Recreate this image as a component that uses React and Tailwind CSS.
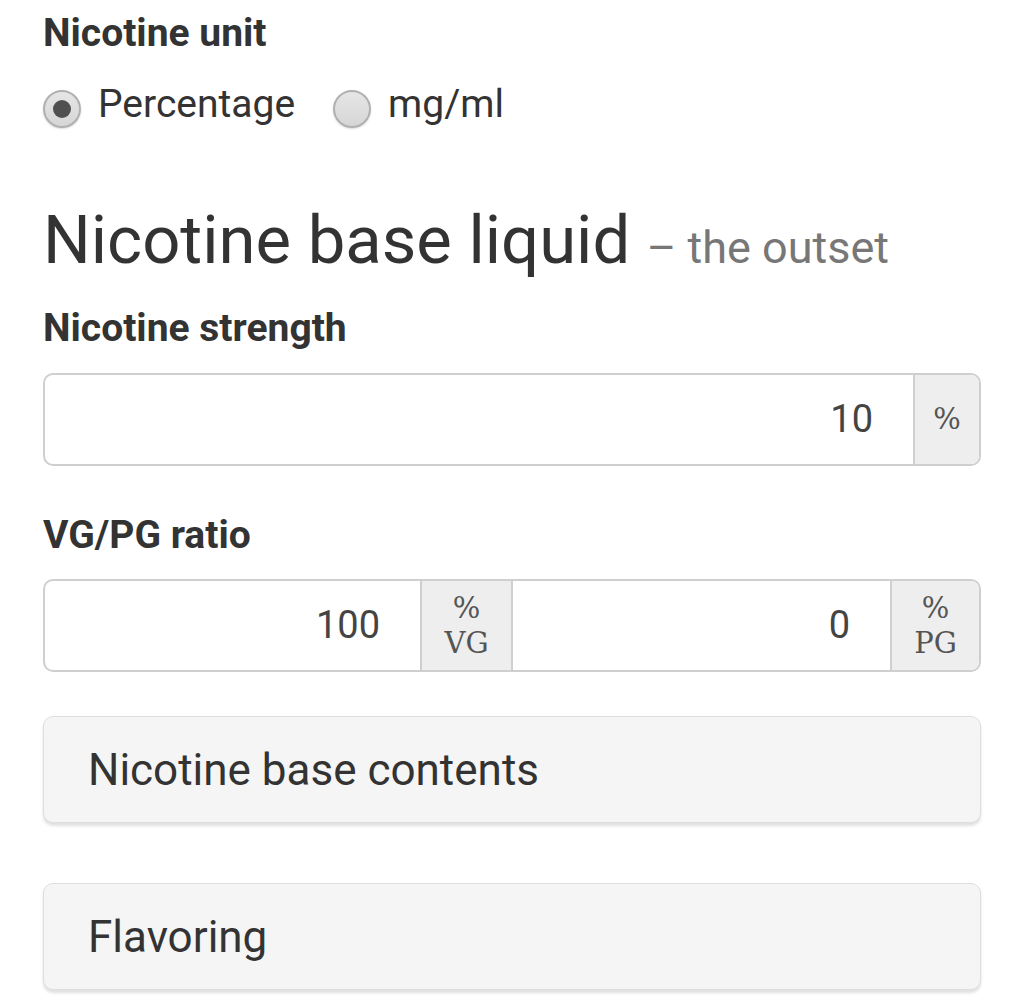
import React, { useState } from 'react';

function Radio({ checked, label, onClick }) {
  return (
    <button onClick={onClick} className="flex items-center h-[48px]">
      <span className="relative mt-[10px] w-[38px] h-[38px] rounded-full border-[2px] border-[#b0b0b0] bg-gradient-to-b from-[#e6e6e6] to-[#d6d6d6] shadow-[0_1px_2px_rgba(0,0,0,0.15)] flex items-center justify-center">
        {checked && <span className="w-[18px] h-[18px] rounded-full bg-[#505050]" />}
      </span>
      <span className="ml-[17px] text-[39px] leading-[48px] text-[#333]">{label}</span>
    </button>
  );
}

function Addon({ children, className = '' }) {
  return (
    <div className={`bg-[#eeeeee] flex flex-col items-center justify-center text-[#555] text-[29px] leading-[35px] font-['DejaVu_Serif',serif] ${className}`}>
      {children}
    </div>
  );
}

function Panel({ title }) {
  return (
    <div className="h-[107px] rounded-[10px] border border-[#dedede] bg-[#f5f5f5] shadow-[0_3px_3px_rgba(0,0,0,0.12)] flex items-center px-[44px]">
      <span className="text-[44px] leading-[52px] text-[#333]">{title}</span>
    </div>
  );
}

export default function App() {
  const [unit, setUnit] = useState('pct');

  return (
    <div className="min-h-screen bg-white px-[43px] pt-[9px] font-['Roboto',sans-serif] text-[#333]">
      {/* Nicotine unit */}
      <div className="text-[39px] leading-[48px] font-bold">Nicotine unit</div>
      <div className="flex items-start gap-[38px] mt-[23px]">
        <Radio checked={unit === 'pct'} label="Percentage" onClick={() => setUnit('pct')} />
        <Radio checked={unit === 'mg'} label="mg/ml" onClick={() => setUnit('mg')} />
      </div>

      {/* Heading */}
      <h1 className="mt-[74px] text-[67px] leading-[76px] whitespace-nowrap">
        Nicotine base liquid{' '}
        <small className="text-[45px] text-[#777]">– the outset</small>
      </h1>

      {/* Strength */}
      <div className="mt-[18px] text-[39px] leading-[48px] font-bold">Nicotine strength</div>
      <div className="mt-[21px] h-[93px] flex rounded-[10px] border-[2px] border-[#cfcfcf] overflow-hidden">
        <div className="flex-1 flex items-center justify-end pr-[40px] text-[38px] text-[#444]">10</div>
        <Addon className="w-[66px] border-l-[2px] border-[#cfcfcf]">%</Addon>
      </div>

      {/* VG/PG */}
      <div className="mt-[45px] text-[39px] leading-[48px] font-bold">VG/PG ratio</div>
      <div className="mt-[20px] h-[93px] flex rounded-[10px] border-[2px] border-[#cfcfcf] overflow-hidden">
        <div className="w-[375px] flex items-center justify-end pr-[40px] text-[38px] text-[#444]">100</div>
        <Addon className="w-[93px] border-x-[2px] border-[#cfcfcf]">
          <span>%</span>
          <span>VG</span>
        </Addon>
        <div className="flex-1 flex items-center justify-end pr-[40px] text-[38px] text-[#444]">0</div>
        <Addon className="w-[89px] border-l-[2px] border-[#cfcfcf]">
          <span>%</span>
          <span>PG</span>
        </Addon>
      </div>

      {/* Panels */}
      <div className="mt-[44px] flex flex-col gap-[60px]">
        <Panel title="Nicotine base contents" />
        <Panel title="Flavoring" />
      </div>
    </div>
  );
}
